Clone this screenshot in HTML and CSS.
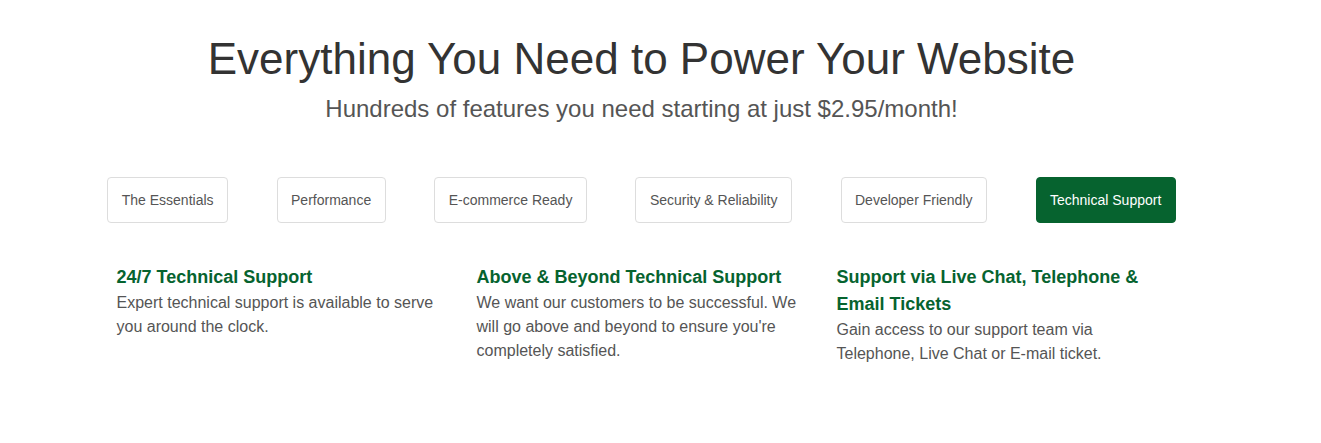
FILE: index.html
```html
<!DOCTYPE html>
<html lang="en">
<head>
<meta charset="utf-8">
<title>Features</title>
<link rel="stylesheet" href="styles.css">
</head>
<body>
<div class="page">
  <h1 class="title">Everything You Need to Power Your Website</h1>
  <p class="subtitle">Hundreds of features you need starting at just $2.95/month!</p>
  <div class="tabs">
    <button class="tab">The Essentials</button>
    <button class="tab">Performance</button>
    <button class="tab">E-commerce Ready</button>
    <button class="tab">Security &amp; Reliability</button>
    <button class="tab">Developer Friendly</button>
    <button class="tab tab-active">Technical Support</button>
  </div>
  <div class="features">
    <div class="feature">
      <h3 class="feature-title">24/7 Technical Support</h3>
      <p class="feature-text">Expert technical support is available to serve you around the clock.</p>
    </div>
    <div class="feature">
      <h3 class="feature-title">Above &amp; Beyond Technical Support</h3>
      <p class="feature-text">We want our customers to be successful. We will go above and beyond to ensure you're completely satisfied.</p>
    </div>
    <div class="feature">
      <h3 class="feature-title">Support via Live Chat, Telephone &amp; Email Tickets</h3>
      <p class="feature-text">Gain access to our support team via Telephone, Live Chat or E-mail ticket.</p>
    </div>
  </div>
</div>
</body>
</html>
```

FILE: styles.css
```css
html, body {
  margin: 0;
  padding: 0;
  background: #fff;
}
body {
  font-family: "Liberation Sans", Arial, sans-serif;
  color: #555;
}
.page {
  width: 1283px;
  padding-top: 37px;
  display: flex;
  flex-direction: column;
  align-items: center;
}
.title {
  margin: 0;
  font-size: 44px;
  line-height: 44px;
  font-weight: 400;
  color: #333;
  text-align: center;
}
.subtitle {
  margin: 14px 0 0;
  font-size: 24px;
  line-height: 28px;
  color: #555;
  text-align: center;
}
.tabs {
  margin-top: 54px;
  display: flex;
  justify-content: center;
  gap: 48.5px;
}
.tab {
  font-family: inherit;
  font-size: 14px;
  line-height: 20px;
  padding: 12px 13.5px;
  color: #555;
  background: #fff;
  border: 1px solid #ddd;
  border-radius: 4px;
  cursor: pointer;
}
.tab-active {
  background: #06632f;
  border-color: #06632f;
  color: #fff;
}
.features {
  margin-top: 41px;
  width: 1080px;
  display: grid;
  grid-template-columns: repeat(3, 1fr);
}
.feature {
  padding: 0 15px;
}
.feature-title {
  margin: 0;
  font-size: 18px;
  line-height: 27px;
  font-weight: 700;
  color: #06632f;
}
.feature-text {
  margin: 0;
  font-size: 16px;
  line-height: 24px;
  color: #555;
}
```
